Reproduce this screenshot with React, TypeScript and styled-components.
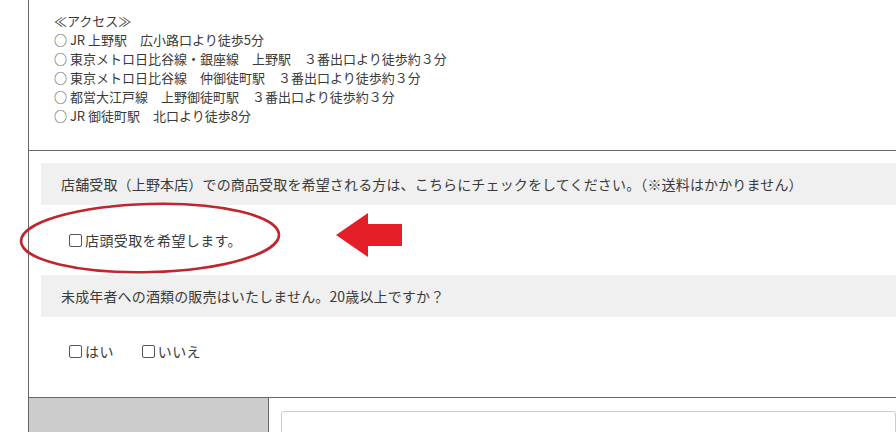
import React from 'react';
import styled, { createGlobalStyle } from 'styled-components';

const GlobalStyle = createGlobalStyle`
  html, body {
    margin: 0;
    padding: 0;
    overflow: hidden;
    background: #fff;
  }
  body {
    font-family: "Noto Sans CJK JP", "Noto Sans", sans-serif;
    color: #3a3a3a;
  }
`;

const Page = styled.div`
  position: relative;
  width: 896px;
  height: 432px;
  overflow: hidden;
`;

const Frame = styled.div`
  margin-left: 28px;
  border-left: 1px solid #666;
  min-height: 432px;
`;

const AccessSection = styled.div`
  box-sizing: border-box;
  height: 150px;
  padding: 11px 0 0 25px;
  font-size: 13px;
  line-height: 19px;
  color: #3a3a3a;
`;

const AccessLine = styled.div`
  white-space: pre;
`;

const FormSection = styled.div`
  border-top: 1px solid #666;
  padding: 12px 0 12px 12px;
`;

const QuestionBox = styled.div`
  box-sizing: border-box;
  height: 42px;
  display: flex;
  align-items: center;
  padding-left: 20px;
  background: #f0f0f0;
  font-size: 14px;
  letter-spacing: 0.15px;
  color: #3a3a3a;
  white-space: nowrap;
`;

const AnswerRow = styled.div<{ $height: number }>`
  height: ${(p) => p.$height}px;
  display: flex;
  align-items: center;
  gap: 28px;
  padding-left: 28px;
`;

const Option = styled.label`
  display: flex;
  align-items: center;
  font-size: 14px;
  color: #3a3a3a;
  letter-spacing: 0.4px;
`;

const Box = styled.input`
  appearance: none;
  box-sizing: border-box;
  width: 13px;
  height: 13px;
  margin: 0 3px 0 0;
  border: 1px solid #555;
  border-radius: 2px;
  background: #fff;
`;

const BottomRow = styled.div`
  display: flex;
  border-top: 1px solid #666;
  height: 60px;
`;

const LabelCell = styled.div`
  width: 239px;
  background: #ccc;
  border-right: 1px solid #666;
`;

const InputCell = styled.div`
  flex: 1;
  padding: 13px 0 0 12px;
`;

const TextInput = styled.div`
  height: 40px;
  border: 1px solid #ccc;
  border-radius: 3px;
`;

const Annotation = styled.svg`
  position: absolute;
  left: 0;
  top: 0;
  pointer-events: none;
`;

const accessLines = [
  '≪アクセス≫',
  '○ JR 上野駅　広小路口より徒歩5分',
  '○ 東京メトロ日比谷線・銀座線　上野駅　３番出口より徒歩約３分',
  '○ 東京メトロ日比谷線　仲御徒町駅　３番出口より徒歩約３分',
  '○ 都営大江戸線　上野御徒町駅　３番出口より徒歩約３分',
  '○ JR 御徒町駅　北口より徒歩8分',
];

const Check = ({ label }: { label: string }) => (
  <Option>
    <Box type="checkbox" />
    {label}
  </Option>
);

const App = () => (
  <Page>
    <GlobalStyle />
    <Frame>
      <AccessSection>
        {accessLines.map((line, i) => (
          <AccessLine key={i}>{line}</AccessLine>
        ))}
      </AccessSection>
      <FormSection>
        <QuestionBox>
          店舗受取（上野本店）での商品受取を希望される方は、こちらにチェックをしてください。（※送料はかかりません）
        </QuestionBox>
        <AnswerRow $height={70}>
          <Check label="店頭受取を希望します。" />
        </AnswerRow>
        <QuestionBox>未成年者への酒類の販売はいたしません。20歳以上ですか？</QuestionBox>
        <AnswerRow $height={68}>
          <Check label="はい" />
          <Check label="いいえ" />
        </AnswerRow>
      </FormSection>
      <BottomRow>
        <LabelCell />
        <InputCell>
          <TextInput />
        </InputCell>
      </BottomRow>
    </Frame>
    <Annotation width="896" height="432">
      <ellipse
        cx="150"
        cy="238"
        rx="129"
        ry="34"
        fill="none"
        stroke="#c0262d"
        strokeWidth="2.6"
        transform="rotate(-1.5 150 238)"
      />
      <polygon
        points="336,235 368,213 368,224 402,224 402,246 368,246 368,257"
        fill="#e41e26"
      />
    </Annotation>
  </Page>
);

export default App;
